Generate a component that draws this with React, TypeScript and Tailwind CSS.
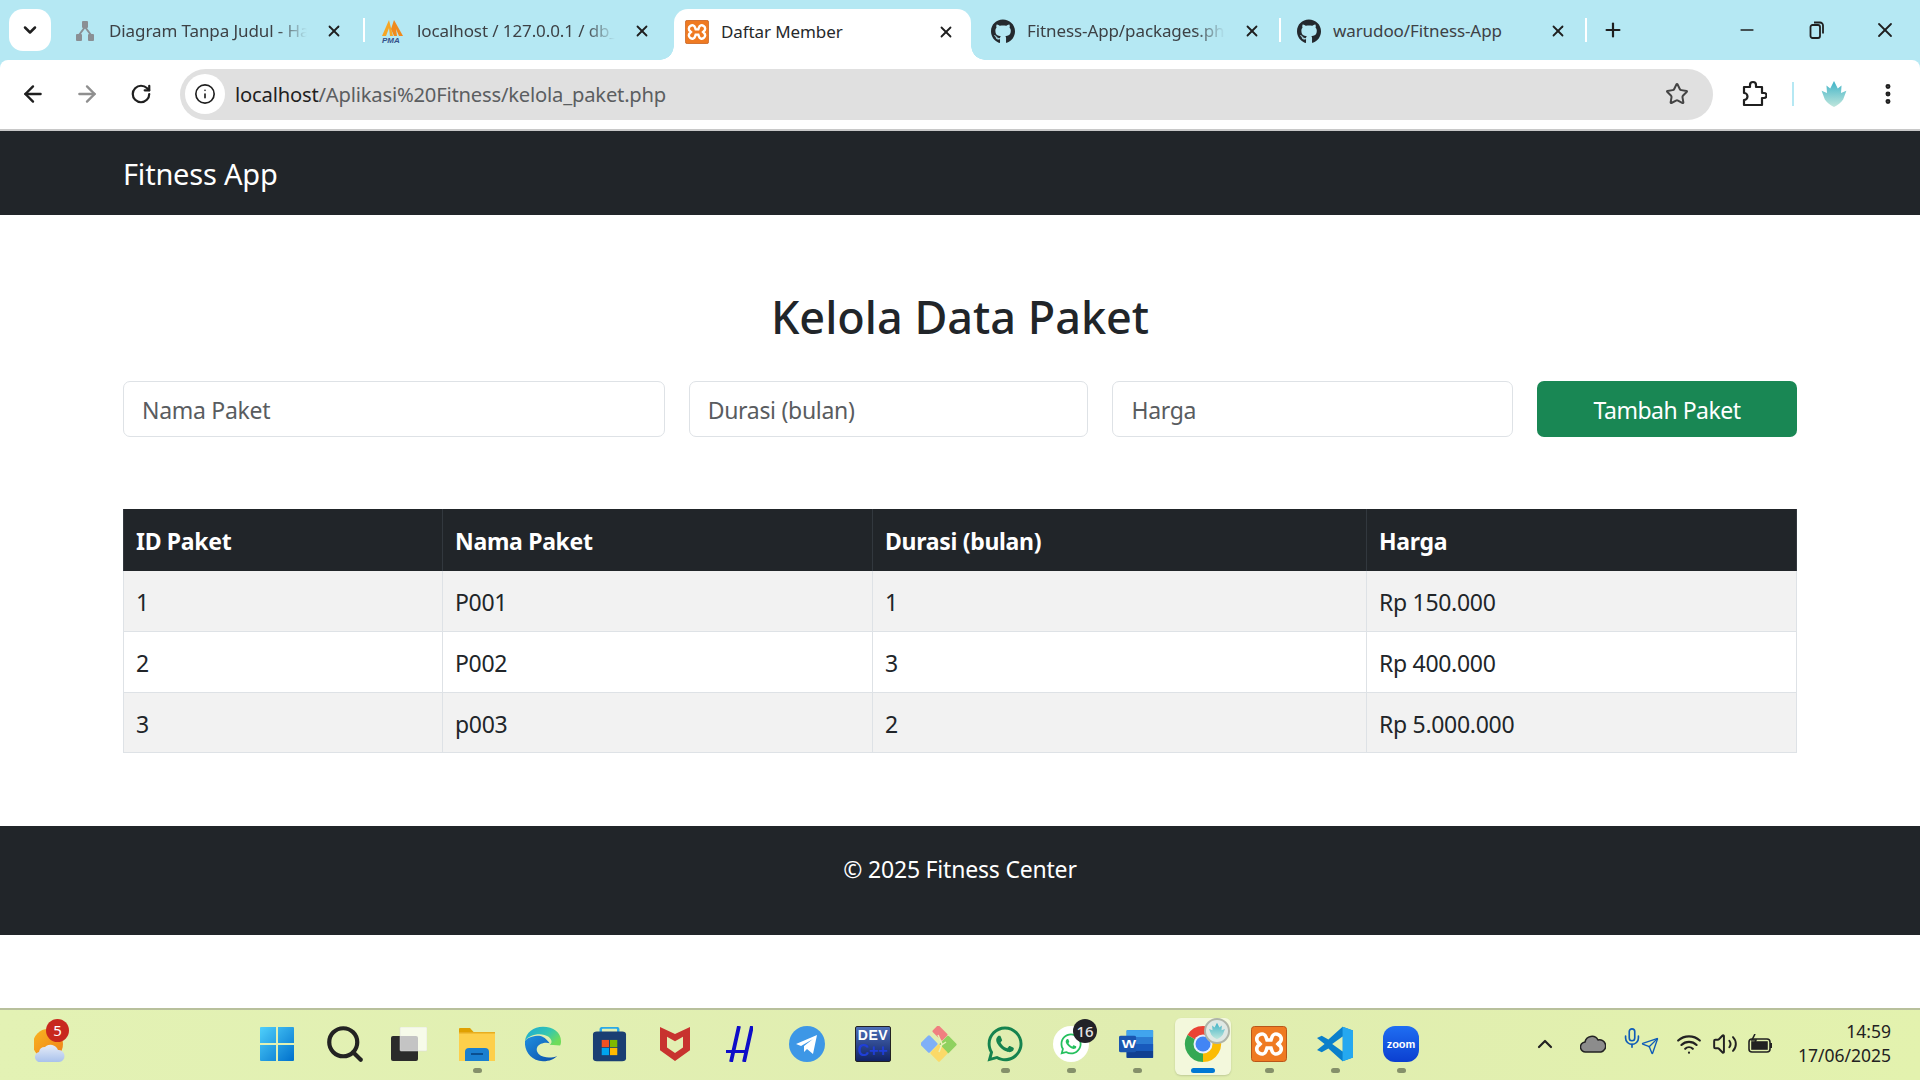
import React from "react";
import { ChevronDown, X, ArrowLeft, ArrowRight, RotateCw, Star, MoreVertical, Plus, Minus, Search, Wifi, Volume2, ChevronUp, Mic, Send, Info } from "lucide-react";
import { FaGithub, FaWhatsapp } from "react-icons/fa";

const Xampp = ({ size = 24 }: { size?: number }) => (
  <svg width={size} height={size} viewBox="0 0 36 36">
    <rect x="0.5" y="0.5" width="35" height="35" rx="3" fill="#ef7a22" stroke="#b9561a" />
    <path d="M8 9c3-2 6-1 7 2l1 3h4l1-3c1-3 4-4 7-2 3 2 3 6 0 8l-1 1 1 1c3 2 3 6 0 8-3 2-6 1-7-2l-1-3h-4l-1 3c-1 3-4 4-7 2-3-2-3-6 0-8l1-1-1-1c-3-2-3-6 0-8z" fill="none" stroke="#fff" strokeWidth="3.6" />
  </svg>
);

const Lotus = ({ size = 26 }: { size?: number }) => (
  <svg width={size} height={size} viewBox="0 0 26 26">
    <defs>
      <linearGradient id="lotus" x1="0" y1="0" x2="0" y2="1">
        <stop offset="0" stopColor="#3fb3c7" />
        <stop offset="1" stopColor="#bfe6dc" />
      </linearGradient>
    </defs>
    <path d="M13 1l3.500 7 3.500-3-.5 7 5-2-3 8c-2 3-5 5-8.500 7-3.500-2-6.500-4-8.500-7l-3-8 5 2-.5-7 3.500 3z" fill="url(#lotus)" />
  </svg>
);

const Pma = () => (
  <svg width="24" height="24" viewBox="0 0 24 24">
    <path d="M8 1L1 17h4l3-8 1 8h3L8 1z" fill="#f6a623" />
    <path d="M13 1l-3 9 3 7h3l-1-7 3 7h4L13 1z" fill="#f08a1d" />
    <text x="1" y="24" fontSize="8" fontWeight="700" fontStyle="italic" fill="#34528a" fontFamily="Liberation Sans">PMA</text>
  </svg>
);

const HeyDiagram = () => (
  <svg width="20" height="22" viewBox="0 0 20 22" fill="#8a8f94">
    <rect x="7" y="1" width="6" height="7" rx="1" />
    <rect x="1" y="14" width="6" height="7" rx="1" />
    <rect x="13" y="14" width="6" height="7" rx="1" />
    <path d="M10 7L4 15M10 7l6 8" stroke="#8a8f94" strokeWidth="2" fill="none" />
  </svg>
);

const Tab = ({ icon, title, active, fade, narrow }: { icon: React.ReactNode; title: string; active?: boolean; fade?: boolean; narrow?: boolean }) => (
  <div className={active ? "relative ml-[3px] mr-[4px] flex h-[51px] w-[297px] items-center rounded-t-[14px] bg-white pb-[5px] pl-[11px]" : narrow ? "flex h-[50px] w-[304px] items-center pl-[16px] pt-[2px]" : "flex h-[50px] w-[306px] items-center pl-[16px] pt-[2px]"}>
    <div className="flex w-[24px] shrink-0 justify-center">{icon}</div>
    <div className={`ml-[12px] w-[198px] overflow-hidden whitespace-nowrap text-[17px] leading-[24px] tracking-[-0.1px] ${active ? "text-[#26282b]" : "text-[#3d4145]"} ${fade ? "[mask-image:linear-gradient(to_right,black_85%,transparent)]" : ""}`}>{title}</div>
    <X className="ml-[18px] shrink-0 text-[#1f1f1f]" size={18} strokeWidth={2.4} />
    {active && <div className="absolute bottom-0 left-[-14px] h-[14px] w-[14px] bg-[radial-gradient(circle_at_0_0,transparent_13.5px,white_14px)]" />}
    {active && <div className="absolute bottom-0 right-[-14px] h-[14px] w-[14px] bg-[radial-gradient(circle_at_100%_0,transparent_13.5px,white_14px)]" />}
  </div>
);

const Sep = () => <div className="h-[24px] w-[2px] shrink-0 bg-white" />;

const Slot = ({ children, dot, active }: { children: React.ReactNode; dot?: boolean; active?: boolean }) => (
  <div className="relative flex h-[66px] w-[66px] items-center justify-center">
    {active && <div className="absolute bottom-[2px] left-[5px] h-[57px] w-[56px] rounded-[6px] bg-[#f3f8dc] shadow-[0_1px_2px_rgba(0,0,0,0.15)]" />}
    <div className="relative flex h-[48px] w-[48px] items-center justify-center">{children}</div>
    {dot && <div className={active ? "absolute bottom-[4px] left-[21px] h-[5px] w-[24px] rounded-full bg-[#0078d4]" : "absolute bottom-[4px] left-[29px] h-[5px] w-[9px] rounded-full bg-[#85906a]"} />}
  </div>
);

const WinLogo = () => (
  <svg width="36" height="36" viewBox="0 0 36 36">
    <defs>
      <linearGradient id="w" x1="0" y1="0" x2="1" y2="1">
        <stop offset="0" stopColor="#4fd0fb" />
        <stop offset="1" stopColor="#0070cc" />
      </linearGradient>
    </defs>
    <path d="M1 2a1 1 0 0 1 1-1h15v16H1zM19 1h15a1 1 0 0 1 1 1v15H19zM1 19h16v16H2a1 1 0 0 1-1-1zM19 19h16v15a1 1 0 0 1-1 1H19z" fill="url(#w)" />
  </svg>
);

const TaskView = () => (
  <svg width="36" height="34" viewBox="0 0 36 34" className="-translate-x-[2px]">
    <rect x="0" y="9" width="27" height="25" rx="2" fill="#2b2b2b" />
    <rect x="9" y="0" width="27" height="24" rx="1" fill="#ffffff" fillOpacity="0.72" stroke="#d8d8d8" strokeWidth="0.5" />
  </svg>
);

const Folder = () => (
  <svg width="36" height="33" viewBox="0 0 36 33">
    <path d="M0 1a1 1 0 0 1 1-1h10l4 4.500H0z" fill="#e0a000" />
    <path d="M0 4h36v29H0z" fill="#fdcf4b" />
    <path d="M0 4h36v1.500H0z" fill="#e8ad20" />
    <path d="M6 33v-9a4 4 0 0 1 4-4h16a4 4 0 0 1 4 4v9z" fill="#1a7fd0" />
    <rect x="12" y="25" width="12" height="2" fill="#0a4f90" />
  </svg>
);

const Edge = () => (
  <svg width="36" height="36" viewBox="0 0 38 48" preserveAspectRatio="none">
    <defs>
      <linearGradient id="e1" x1="0" y1="0" x2="1" y2="0.6">
        <stop offset="0" stopColor="#1aa7d8" />
        <stop offset="0.6" stopColor="#33c6b0" />
        <stop offset="1" stopColor="#6fdc5a" />
      </linearGradient>
      <linearGradient id="e2" x1="0" y1="0" x2="1" y2="1">
        <stop offset="0" stopColor="#1f8fe0" />
        <stop offset="1" stopColor="#0b4fa8" />
      </linearGradient>
    </defs>
    <path d="M19 1C9 1 1 9 0 20c3-6 9-9 15-9 8 0 13 5 13 10 0 2-1 3-2 4l11 1c1-2 1-4 1-6C38 9 30 1 19 1z" fill="url(#e1)" />
    <path d="M0 20c-1 13 6 26 19 27 7 0 12-3 15-7-4 2-10 3-14 1-6-2-9-8-7-13s9-7 13-5c-3-5-7-10-11-10-6 0-12 2-15 7z" fill="url(#e2)" />
  </svg>
);

const Store = () => (
  <svg width="35" height="35" viewBox="0 0 36 46" preserveAspectRatio="none">
    <path d="M9 9V3a2 2 0 0 1 2-2h14a2 2 0 0 1 2 2v6" stroke="#29a9e8" strokeWidth="2.5" fill="none" />
    <rect x="1" y="6" width="34" height="39" rx="4" fill="#1a3f73" />
    <rect x="10" y="17" width="7.500" height="9.500" fill="#f25022" />
    <rect x="18.500" y="17" width="7.500" height="9.500" fill="#7fba00" />
    <rect x="10" y="27.500" width="7.500" height="9.500" fill="#00a4ef" />
    <rect x="18.500" y="27.500" width="7.500" height="9.500" fill="#ffb900" />
  </svg>
);

const McAfee = () => (
  <svg width="32" height="36" viewBox="0 0 32 40" preserveAspectRatio="none">
    <path d="M1 1l15 8 15-8v26L16 39 1 27z" fill="#c8332f" />
    <path d="M8 12l8 5 8-5v12l-8 6-8-6z" fill="#e3efb2" />
  </svg>
);

const Hash = () => (
  <svg width="27" height="36" viewBox="0 0 27 36" fill="none" stroke="#0e0ec8" strokeWidth="3.800" className="-translate-x-[2px]">
    <path d="M13 0L5 36M26 0L18 36" />
    <path d="M0 25.500h22" strokeWidth="3" />
  </svg>
);

const Telegram = () => (
  <svg width="36" height="36" viewBox="0 0 36 36">
    <circle cx="18" cy="18" r="18" fill="#3d97e6" />
    <path d="M7 18l21-9-4 19-6-5-3 3 0-6 9-7-12 7z" fill="#fff" />
  </svg>
);

const Dev = () => (
  <div className="flex h-[36px] w-[36px] flex-col items-center rounded-[2px] border border-[#222] bg-[linear-gradient(#4d6fb8,#102266)] font-['Liberation_Sans',sans-serif] font-bold leading-[16px]">
    <span className="text-[14px] tracking-[0.5px] text-white">DEV</span>
    <span className="text-[16px] text-[#1f3fd8]">C++</span>
  </div>
);

const Gitish = () => (
  <svg width="36" height="36" viewBox="0 0 36 36">
    <rect x="-6.500" y="-6.500" width="13" height="13" rx="1.500" transform="translate(8 18) rotate(45)" fill="#7fb0f7" />
    <rect x="-6.500" y="-6.500" width="13" height="13" rx="1.500" transform="translate(27 18.500) rotate(45)" fill="#8fd15f" />
    <rect x="-6.500" y="-6.500" width="13" height="13" rx="1.500" transform="translate(18 27) rotate(45)" fill="#fbd968" />
    <rect x="-4.500" y="-7" width="9" height="14" rx="1.500" transform="translate(19 7) rotate(-45)" fill="#f08080" />
    <path d="M17 9l4 9-3 8M25 16l-6 4" stroke="#e9f2b6" strokeWidth="1.500" fill="none" />
  </svg>
);

const Word = () => (
  <svg width="36" height="32" viewBox="0 0 38 46" preserveAspectRatio="none">
    <rect x="8" y="3" width="28" height="40" rx="2" fill="#2b7cd3" />
    <rect x="8" y="3" width="28" height="10" fill="#41a5ee" />
    <rect x="8" y="23" width="28" height="10" fill="#185abd" />
    <rect x="8" y="33" width="28" height="10" fill="#103f91" />
    <rect x="0" y="11" width="18" height="24" rx="2" fill="#1a56b0" />
    <text x="3" y="29" fontSize="16" fontWeight="700" fill="#fff" fontFamily="Liberation Sans">W</text>
  </svg>
);

const Chrome = () => (
  <div className="relative h-[48px] w-[48px]">
    <svg width="48" height="48" viewBox="0 0 48 48" className="absolute left-0 top-0">
      <path d="M24 24L8.400 15A18 18 0 0 1 39.600 15Z" fill="#ea4335" />
      <path d="M24 24L39.600 15A18 18 0 0 1 24 42Z" fill="#fbbc04" />
      <path d="M24 24L24 42A18 18 0 0 1 8.400 15Z" fill="#34a853" />
      <circle cx="24" cy="24" r="9.500" fill="#e8f0fe" />
      <circle cx="24" cy="24" r="7.500" fill="#4285f4" />
    </svg>
    <div className="absolute left-[25px] top-[-2px] flex h-[26px] w-[26px] items-center justify-center rounded-full border-2 border-[#aeb4a8] bg-[#dfe8e4]">
      <Lotus size={18} />
    </div>
  </div>
);

const VSCode = () => (
  <svg width="36" height="36" viewBox="0 0 38 48" preserveAspectRatio="none">
    <path d="M27 1l11 5v36l-11 5-15-17-7 5-5-3 8-8-8-8 5-3 7 5z" fill="#0a7fcb" />
    <path d="M27 1l11 5v36l-11 5z" fill="#25a8f0" />
    <path d="M27 14L16 24l11 10z" fill="#e3f0b0" />
  </svg>
);

const Zoom = () => (
  <div className="flex h-[36px] w-[36px] items-center justify-center rounded-[12px] bg-[linear-gradient(#1f6ef2,#0b3fd0)] font-['Liberation_Sans',sans-serif] text-[11px] font-bold text-white">zoom</div>
);

const Weather = () => (
  <div className="relative h-[48px] w-[48px]">
    <svg width="32" height="34" viewBox="0 0 32 34" className="absolute left-[8px] top-[9px]">
      <defs>
        <linearGradient id="sun" x1="0" y1="0" x2="1" y2="1">
          <stop offset="0" stopColor="#f9b420" />
          <stop offset="1" stopColor="#ee7f1a" />
        </linearGradient>
        <linearGradient id="cl" x1="0" y1="0" x2="0" y2="1">
          <stop offset="0" stopColor="#e6ecf8" />
          <stop offset="1" stopColor="#a9c2ec" />
        </linearGradient>
      </defs>
      <circle cx="14" cy="15" r="15" fill="url(#sun)" />
      <path d="M7 33a5 5 0 0 1-2-10 6 6 0 0 1 6-5 8 8 0 0 1 13 3 6 6 0 0 1 1 12z" fill="url(#cl)" />
    </svg>
    <div className="absolute left-[20px] top-[-1px] flex h-[23px] w-[23px] items-center justify-center rounded-full bg-[#c8281e] text-[15px] leading-none text-white">5</div>
  </div>
);

const Tr = ({ a, b, c, d, odd }: { a: string; b: string; c: string; d: string; odd?: boolean }) => (
  <tr className={`h-[60.6px] border-b border-[#dee2e6] text-[23px] tracking-[-0.3px] text-[#212529] ${odd ? "bg-[#f2f2f2]" : "bg-white"}`}>
    <td className="border-x border-[#dee2e6] pl-[12px] pr-[13px] pt-[3px]">{a}</td>
    <td className="border-x border-[#dee2e6] pl-[12px] pr-[13px] pt-[3px]">{b}</td>
    <td className="border-x border-[#dee2e6] pl-[12px] pr-[13px] pt-[3px]">{c}</td>
    <td className="border-x border-[#dee2e6] pl-[12px] pr-[13px] pt-[3px]">{d}</td>
  </tr>
);

export default function App() {
  return (
    <div className="flex h-[1080px] w-[1920px] flex-col overflow-hidden bg-white font-['Noto_Sans',sans-serif] text-[#212529]">
      {/* tab strip */}
      <div className="flex h-[60px] shrink-0 items-end bg-[#b5e8f3]">
        <div className="mb-[9px] ml-[9px] flex h-[42px] w-[42px] shrink-0 items-center justify-center rounded-[14px] bg-white">
          <ChevronDown size={20} strokeWidth={3} className="text-[#1f1f1f]" />
        </div>
        <div className="ml-[6px] flex h-[60px] flex-1 items-end">
          <div className="flex h-[60px] items-center"><Tab icon={<HeyDiagram />} title="Diagram Tanpa Judul - Halaman" fade /><Sep /></div>
          <div className="flex h-[60px] items-center"><Tab icon={<Pma />} title="localhost / 127.0.0.1 / db_fitness" fade /></div>
          <Tab icon={<Xampp />} title="Daftar Member" active />
          <div className="flex h-[60px] items-center"><Tab narrow icon={<FaGithub size={27} className="text-[#24292e]" />} title="Fitness-App/packages.php at main" fade /><Sep /></div>
          <div className="flex h-[60px] items-center"><Tab narrow icon={<FaGithub size={27} className="text-[#24292e]" />} title="warudoo/Fitness-App" /><Sep /></div>
          <div className="flex h-[60px] items-center pl-[15px]"><Plus size={22} strokeWidth={2.4} className="text-[#1f1f1f]" /></div>
          <div className="flex h-[60px] flex-1 items-center justify-end">
            <div className="mr-[4px] flex w-[66px] justify-center"><Minus size={20} strokeWidth={2} className="text-[#1f1f1f]" /></div>
            <div className="flex w-[66px] justify-center">
              <svg width="16" height="18" viewBox="0 0 16 18" fill="none" stroke="#1f1f1f" strokeWidth="1.800"><rect x="1.500" y="4" width="9.500" height="13" rx="2" /><path d="M5 1.500h6a3 3 0 0 1 3 3v8" /></svg>
            </div>
            <div className="flex w-[70px] justify-center"><X size={24} strokeWidth={1.8} className="text-[#1f1f1f]" /></div>
          </div>
        </div>
      </div>

      {/* toolbar */}
      <div className="shrink-0 bg-[#b5e8f3]">
        <div className="flex h-[71px] items-center rounded-t-[8px] border-b-2 border-[#c8c8c8] bg-white pb-[1px]">
          <ArrowLeft size={26} strokeWidth={2.2} className="ml-[20px] text-[#1f1f1f]" />
          <ArrowRight size={26} strokeWidth={2.2} className="ml-[28px] text-[#8f8f8f]" />
          <RotateCw size={22} strokeWidth={2.4} className="ml-[30px] text-[#1f1f1f]" />
          <div className="ml-[28px] flex h-[51px] w-[1533px] items-center rounded-full bg-[#e0e0e0] pl-[5px]">
            <div className="flex h-[40px] w-[40px] items-center justify-center rounded-full bg-white"><Info size={22} strokeWidth={1.8} className="text-[#1f1f1f]" /></div>
            <div className="ml-[10px] flex-1 text-[20.200px] tracking-[-0.2px] text-[#5b5e61]"><span className="text-[#1f1f1f]">localhost</span>/Aplikasi%20Fitness/kelola_paket.php</div>
            <Star size={24} strokeWidth={2} className="mr-[24px] text-[#444]" />
          </div>
          <svg width="26" height="28" viewBox="0 0 26 28" className="ml-[28px]" fill="none" stroke="#1f1f1f" strokeWidth="2.200">
            <path d="M3 7h6V5a3 3 0 0 1 6 0v2h6v6h2a2 2 0 0 1 0 5h-2v7H3v-5a3 3 0 0 0 0-7z" strokeLinejoin="round" />
          </svg>
          <div className="ml-[25px] h-[24px] w-[2px] bg-[#b5e8f3]" />
          <div className="ml-[26px]"><Lotus size={28} /></div>
          <MoreVertical size={26} strokeWidth={2.6} className="ml-[27px] text-[#1f1f1f]" />
        </div>
      </div>

      {/* navbar */}
      <nav className="flex h-[84px] shrink-0 items-center bg-[#212529] pl-[123px] pt-[2px] text-[29px] tracking-[-0.2px] text-white">Fitness App</nav>

      {/* main */}
      <main className="flex-1 px-[123px]">
        <h1 className="mt-[52px] h-[100px] text-center text-[45px] font-medium leading-[100px] text-[#212529]">Kelola Data Paket</h1>
        <form className="mt-[14px] flex">
          <input className="h-[56px] w-[542px] rounded-[7px] border border-[#dee2e6] bg-white px-[18px] pt-[2px] text-[23px] tracking-[-0.3px] placeholder:text-[#595c5f]" placeholder="Nama Paket" readOnly />
          <input className="ml-[24px] h-[56px] w-[400px] rounded-[7px] border border-[#dee2e6] bg-white px-[18px] pt-[2px] text-[23px] tracking-[-0.3px] placeholder:text-[#595c5f]" placeholder="Durasi (bulan)" readOnly />
          <input className="ml-[24px] h-[56px] w-[401px] rounded-[7px] border border-[#dee2e6] bg-white px-[18px] pt-[2px] text-[23px] tracking-[-0.3px] placeholder:text-[#595c5f]" placeholder="Harga" readOnly />
          <button type="button" className="ml-[24px] h-[56px] w-[260px] rounded-[7px] bg-[#198754] pt-[3px] text-[23px] tracking-[-0.5px] text-white">Tambah Paket</button>
        </form>
        <table className="mt-[72px] w-[1673px] table-fixed border-collapse">
          <colgroup>
            <col className="w-[319px]" />
            <col className="w-[430px]" />
            <col className="w-[494px]" />
            <col className="w-[430px]" />
          </colgroup>
          <thead>
            <tr className="h-[62px] bg-[#212529] text-left text-[23px] font-bold tracking-[-0.3px] text-white">
              <th className="border-x border-[#32383e] pl-[12px] pr-[13px] pt-[2px]">ID Paket</th>
              <th className="border-x border-[#32383e] pl-[12px] pr-[13px] pt-[2px]">Nama Paket</th>
              <th className="border-x border-[#32383e] pl-[12px] pr-[13px] pt-[2px]">Durasi (bulan)</th>
              <th className="border-x border-[#32383e] pl-[12px] pr-[13px] pt-[2px]">Harga</th>
            </tr>
          </thead>
          <tbody>
            <Tr odd a="1" b="P001" c="1" d="Rp 150.000" />
            <Tr a="2" b="P002" c="3" d="Rp 400.000" />
            <Tr odd a="3" b="p003" c="2" d="Rp 5.000.000" />
          </tbody>
        </table>
      </main>

      {/* footer */}
      <footer className="mb-[73px] flex h-[109px] shrink-0 justify-center bg-[#212529] pt-[25px] text-[23px] leading-[36px] tracking-[-0.2px] text-white">© 2025 Fitness Center</footer>

      {/* taskbar */}
      <div className="relative flex h-[72px] shrink-0 items-center border-t-2 border-[#b8c09c] bg-[linear-gradient(100deg,#e3f2b4,#e0edb0_60%,#e3f2ae)] pb-[2px]">
        <div className="ml-[26px] w-[218px]"><Weather /></div>
        <Slot><WinLogo /></Slot>
        <div className="w-[2px]" />
        <Slot><Search size={42} strokeWidth={2.4} className="text-[#222]" /></Slot>
        <Slot><TaskView /></Slot>
        <Slot dot><Folder /></Slot>
        <Slot><Edge /></Slot>
        <Slot><Store /></Slot>
        <Slot><McAfee /></Slot>
        <Slot><Hash /></Slot>
        <Slot><Telegram /></Slot>
        <Slot><Dev /></Slot>
        <Slot><Gitish /></Slot>
        <Slot dot><FaWhatsapp size={40} className="text-[#15834f]" /></Slot>
        <Slot dot>
          <div className="relative flex h-[36px] w-[36px] items-center justify-center rounded-full bg-white">
            <FaWhatsapp size={24} className="text-[#25c05f]" />
            <div className="absolute left-[20px] top-[-7px] flex h-[24px] w-[24px] items-center justify-center rounded-full bg-[#222228] text-[15px] font-medium leading-none text-[#e6e6e6]">16</div>
          </div>
        </Slot>
        <Slot dot><Word /></Slot>
        <Slot dot active><Chrome /></Slot>
        <Slot dot><Xampp size={36} /></Slot>
        <Slot dot><VSCode /></Slot>
        <Slot dot><Zoom /></Slot>
        <ChevronUp size={24} strokeWidth={2.2} className="ml-[99px] text-[#222]" />
        <svg width="26" height="18" viewBox="0 0 26 18" className="ml-[23px]"><path d="M6 17a5 5 0 0 1-1-10 7 7 0 0 1 13-2 6 6 0 0 1 3 12z" fill="#8c8c8c" stroke="#222" strokeWidth="1.500" /></svg>
        <Mic size={22} strokeWidth={1.8} className="ml-[15px] -translate-y-[6px] text-[#0f5cb8]" />
        <Send size={18} strokeWidth={1.8} className="ml-[-2px] translate-y-[2px] text-[#0f5cb8]" />
        <Wifi size={26} strokeWidth={2} className="ml-[17px] text-[#222]" />
        <Volume2 size={26} strokeWidth={1.800} className="ml-[10px] text-[#222]" />
        <svg width="26" height="20" viewBox="0 0 26 20" className="ml-[10px]" fill="none" stroke="#222" strokeWidth="1.600"><rect x="1" y="5" width="21" height="13" rx="3" /><rect x="4" y="8" width="15" height="7" fill="#222" /><path d="M23 9v5" strokeWidth="2" /><path d="M7 0L4 6h4L6 11" stroke="#222" /></svg>
        <div className="ml-auto mr-[29px] pb-[2px] text-right text-[17.500px] leading-[24px] text-[#222]">
          <div>14:59</div>
          <div>17/06/2025</div>
        </div>
      </div>
    </div>
  );
}
